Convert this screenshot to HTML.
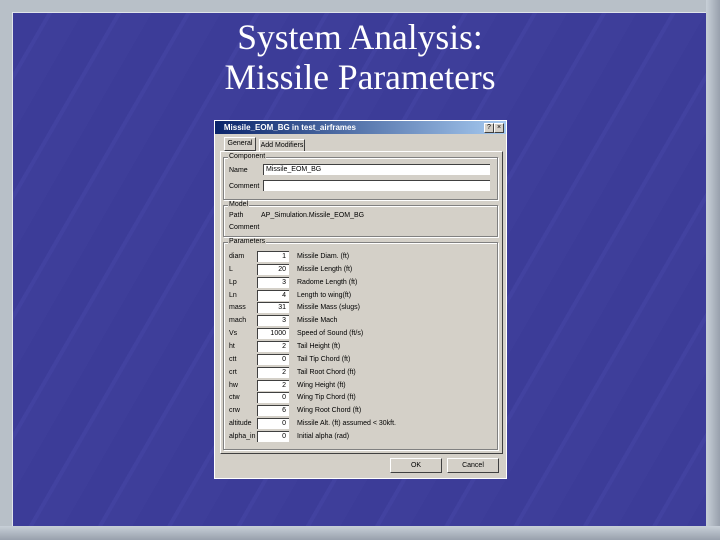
<!DOCTYPE html><html><head><style>
body{margin:0;width:720px;height:540px;overflow:hidden;background:#b8c0c8;font-family:"Liberation Sans",sans-serif}
#bg{position:absolute;left:0;top:0;width:720px;height:540px;background:#b8c0c8}
#blue{position:absolute;left:13px;top:13px;width:693px;height:513px;background:repeating-linear-gradient(120deg,#3c3c98 0 30px,#4242a0 30px 34px,#3e3e9a 34px 60px);box-shadow:0 0 0 1px #e0e4ea}
#rb{position:absolute;left:706px;top:0;width:14px;height:540px;background:linear-gradient(90deg,#c8d0d8,#98a0ac)}
#bb{position:absolute;left:0;top:526px;width:720px;height:14px;background:linear-gradient(#c8d0d8,#98a0ac)}
h1{position:absolute;left:0;width:720px;top:17px;margin:0;text-align:center;font:400 35.5px/40px "Liberation Serif",serif;color:#fff}
.a{position:absolute}
#dlg{left:214px;top:120px;width:293px;height:359px;background:#d4d0c8;border:1px solid #fff;box-sizing:border-box;font-size:7px;color:#000}
#tb{left:215px;top:121px;width:291px;height:13px;background:linear-gradient(90deg,#0a246a,#a6caf0);color:#fff;font-weight:bold;font-size:8px;line-height:13px}
.g{position:absolute;border:1px solid #808080;box-shadow:1px 1px 0 #fff inset,1px 1px 0 #fff}
.gl{position:absolute;background:#d4d0c8;padding:0 1px;font-size:7px;line-height:8px}
.in{position:absolute;background:#fff;border-top:1px solid #404040;border-left:1px solid #404040;box-sizing:border-box;height:11px;text-align:right;padding-right:3px;font-size:7px;line-height:10px}
.t{position:absolute;font-size:7px;line-height:9px;white-space:nowrap}
.btn{position:absolute;background:#d4d0c8;border:1px solid;border-color:#fff #404040 #404040 #fff;box-sizing:border-box;text-align:center;font-size:7px;line-height:13px;white-space:nowrap}
</style></head><body>
<div id="bg"></div><div id="blue"></div><div id="rb"></div><div id="bb"></div>
<h1>System Analysis:<br>Missile Parameters</h1>
<div id="dlg" class="a"></div>
<div id="tb" class="a">&nbsp;&nbsp;&nbsp;&nbsp;Missile_EOM_BG in test_airframes</div>
<div class="btn" style="left:484px;top:123px;width:10px;height:10px;line-height:8px;color:#000">?</div>
<div class="btn" style="left:494px;top:123px;width:10px;height:10px;line-height:8px;color:#000">×</div>
<div class="btn" style="left:224px;top:137px;width:32px;height:14px;line-height:12px">General</div>
<div class="btn" style="left:259px;top:139px;width:46px;height:13px;line-height:11px;border-bottom:none">Add Modifiers</div>
<div class="a" style="left:220px;top:151px;width:281px;height:301px;border:1px solid;border-color:#fff #404040 #404040 #fff"></div>
<div class="g" style="left:223px;top:157px;width:273px;height:41px"></div><div class="gl" style="left:228px;top:153px">Component</div>
<div class="t" style="left:229px;top:166px">Name</div>
<div class="in" style="left:263px;top:164px;width:227px;text-align:left;padding-left:2px">Missile_EOM_BG</div>
<div class="t" style="left:229px;top:182px">Comment</div>
<div class="in" style="left:263px;top:180px;width:227px"></div>
<div class="g" style="left:223px;top:205px;width:273px;height:30px"></div><div class="gl" style="left:228px;top:201px">Model</div>
<div class="t" style="left:229px;top:211px">Path</div>
<div class="t" style="left:261px;top:211px">AP_Simulation.Missile_EOM_BG</div>
<div class="t" style="left:229px;top:223px">Comment</div>
<div class="g" style="left:223px;top:242px;width:273px;height:206px"></div><div class="gl" style="left:228px;top:238px">Parameters</div>
<div id="rows"></div>
<div class="btn" style="left:390px;top:458px;width:52px;height:15px">OK</div>
<div class="btn" style="left:447px;top:458px;width:52px;height:15px">Cancel</div>
<script>
var r=[["diam","1","Missile Diam. (ft)"],["L","20","Missile Length (ft)"],["Lp","3","Radome Length (ft)"],["Ln","4","Length to wing(ft)"],["mass","31","Missile Mass (slugs)"],["mach","3","Missile Mach"],["Vs","1000","Speed of Sound (ft/s)"],["ht","2","Tail Height (ft)"],["ctt","0","Tail Tip Chord (ft)"],["crt","2","Tail Root Chord (ft)"],["hw","2","Wing Height (ft)"],["ctw","0","Wing Tip Chord (ft)"],["crw","6","Wing Root Chord (ft)"],["altitude","0","Missile Alt. (ft) assumed < 30kft."],["alpha_in","0","Initial alpha (rad)"]];
var h="";r.forEach(function(x,i){var y=251+i*12.86;h+='<div class="t" style="left:229px;top:'+(y+1)+'px">'+x[0]+'</div><div class="in" style="left:257px;top:'+y+'px;width:32px">'+x[1]+'</div><div class="t" style="left:297px;top:'+(y+1)+'px">'+x[2]+'</div>';});
document.getElementById("rows").innerHTML=h;
</script>
</body></html>
